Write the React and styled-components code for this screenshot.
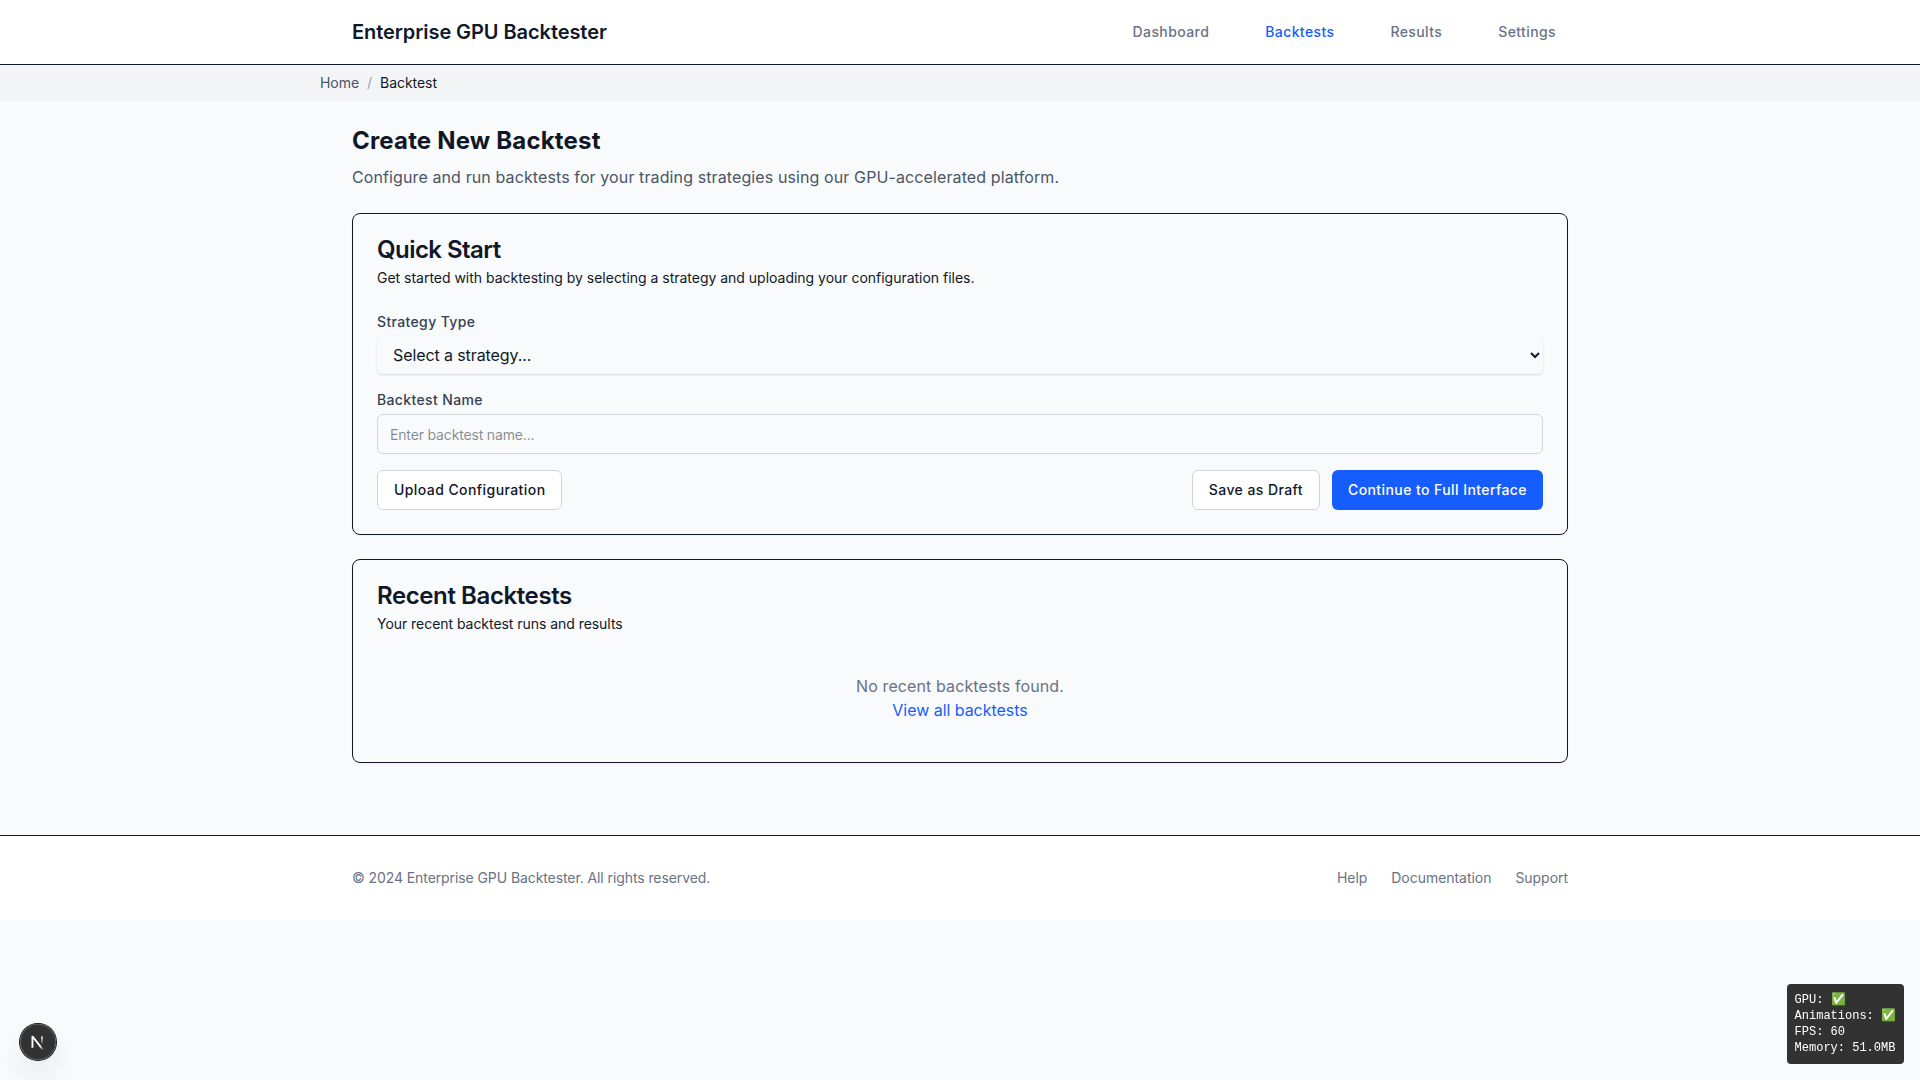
import React from "react";
import styled, { createGlobalStyle, css } from "styled-components";

const GlobalStyle = createGlobalStyle`
  *, *::before, *::after { box-sizing: border-box; }
  body {
    margin: 0;
    background: #f9fafb;
    color: #101828;
    font-family: Inter, "Liberation Sans", sans-serif;
    font-size: 16px;
    line-height: 24px;
  }
  h1, h2, h3, p { margin: 0; }
  a { color: inherit; text-decoration: none; }
  button, input, select { font-family: inherit; color: inherit; margin: 0; }
`;

const Header = styled.header`
  background: #fff;
  border-bottom: 1px solid #101828;
`;

const Container = styled.div`
  width: 100%;
  max-width: 1280px;
  margin: 0 auto;
  padding: 0 32px;
`;

const HeaderRow = styled(Container)`
  display: flex;
  align-items: center;
  justify-content: space-between;
  height: 64px;
`;

const Brand = styled.h1`
  font-size: 20px;
  line-height: 28px;
  font-weight: 600;
  letter-spacing: -0.07px;
`;

const Nav = styled.nav`
  display: flex;
  gap: 32px;
`;

const NavLink = styled.a`
  padding: 8px 12px;
  font-size: 14px;
  line-height: 20px;
  font-weight: 500;
  letter-spacing: 0.4px;
  color: ${(p) => (p.$active ? "#155dfc" : "#6a7282")};
`;

const BreadcrumbBar = styled.div`
  background: #f3f4f6;
  padding: 8px 0;
`;

const Breadcrumb = styled.nav`
  display: flex;
  gap: 8px;
  max-width: 1280px;
  margin: 0 auto;
  font-size: 14px;
  line-height: 20px;
  letter-spacing: -0.05px;
`;

const Crumb = styled.span`
  color: ${(p) => p.$color};
`;

const Main = styled(Container).attrs({ as: "main" })`
  display: flex;
  flex-direction: column;
  gap: 24px;
  padding-top: 24px;
  padding-bottom: 24px;
`;

const PageTitle = styled.h2`
  font-size: 24px;
  line-height: 32px;
  font-weight: 700;
  letter-spacing: 0.18px;
`;

const PageIntro = styled.p`
  margin-top: 8px;
  letter-spacing: 0.108px;
  color: #4a5565;
`;

const Card = styled.section`
  border: 1px solid #101828;
  border-radius: 8px;
  padding: 24px;
  box-shadow: 0 1px 2px 0 rgba(0, 0, 0, 0.05);
`;

const CardHeader = styled.div`
  display: flex;
  flex-direction: column;
  gap: 6px;
  margin-bottom: 24px;
`;

const CardTitle = styled.h3`
  font-size: 24px;
  line-height: 24px;
  font-weight: 600;
  letter-spacing: ${(p) => p.$tracking};
`;

const CardDescription = styled.p`
  font-size: 14px;
  line-height: 20px;
  letter-spacing: ${(p) => p.$tracking};
`;

const Form = styled.div`
  display: flex;
  flex-direction: column;
  gap: 16px;
`;

const Field = styled.div`
  display: flex;
  flex-direction: column;
  gap: 4px;
`;

const Label = styled.label`
  font-size: 14px;
  line-height: 20px;
  font-weight: 500;
  letter-spacing: 0.36px;
  color: #364153;
`;

const Select = styled.select`
  width: 100%;
  height: 38px;
  padding: 8px 12px;
  border: 0;
  border-radius: 6px;
  background: transparent;
  font-size: 16px;
  letter-spacing: -0.1px;
  box-shadow: 0 1px 3px 0 rgba(0, 0, 0, 0.1), 0 1px 2px -1px rgba(0, 0, 0, 0.1);
`;

const Input = styled.input`
  width: 100%;
  height: 40px;
  padding: 8px 12px;
  border: 1px solid #d1d5dc;
  border-radius: 6px;
  background: transparent;
  font-size: 14px;
  line-height: 20px;
  letter-spacing: -0.16px;
  &::placeholder { color: rgba(16, 24, 40, 0.5); opacity: 1; }
`;

const Actions = styled.div`
  display: flex;
  justify-content: space-between;
`;

const ActionGroup = styled.div`
  display: flex;
  gap: 12px;
`;

const Button = styled.button`
  height: 40px;
  padding: 0 16px;
  border: 1px solid #d1d5dc;
  border-radius: 6px;
  background: #fff;
  font-size: 14px;
  line-height: 20px;
  font-weight: 500;
  letter-spacing: 0.42px;
  ${(p) => p.$primary && css`
    border: 0;
    background: #155dfc;
    color: #fff;
  `}
`;

const EmptyState = styled.div`
  padding: 16px 0;
  text-align: center;
  letter-spacing: 0.11px;
  color: #6a7282;
`;

const TextLink = styled.a`
  display: block;
  letter-spacing: -0.04px;
  color: #155dfc;
`;

const Footer = styled.footer`
  margin-top: 48px;
  padding: 32px 0;
  background: #fff;
  border-top: 1px solid #101828;
`;

const FooterRow = styled(Container)`
  display: flex;
  justify-content: space-between;
  font-size: 14px;
  line-height: 20px;
  letter-spacing: -0.09px;
  color: #6a7282;
`;

const FooterLinks = styled.div`
  display: flex;
  gap: 24px;
  letter-spacing: -0.04px;
`;

const StatsOverlay = styled.div`
  position: fixed;
  right: 16px;
  bottom: 16px;
  padding: 8px;
  border-radius: 4px;
  background: rgba(0, 0, 0, 0.8);
  color: #fff;
  font-family: "Liberation Mono", monospace;
  font-size: 12px;
  line-height: 16px;
  white-space: pre;
`;

const DevBadge = styled.div`
  position: fixed;
  left: 20px;
  bottom: 20px;
  width: 36px;
  height: 36px;
  display: flex;
  align-items: center;
  justify-content: center;
  border-radius: 50%;
  background: rgba(0, 0, 0, 0.8);
  box-shadow: 0 0 0 1px #171717, inset 0 0 0 1px rgba(255, 255, 255, 0.14),
    0 16px 32px -8px rgba(0, 0, 0, 0.24);
`;

const Mark = styled.svg`
  flex: none;
`;

const navItems = ["Dashboard", "Backtests", "Results", "Settings"];

function NextMark() {
  return (
    <Mark width="40" height="40" viewBox="0 0 40 40" fill="none">
      <g transform="translate(12.1, 13)" strokeWidth="1.86">
        <path d="M13.3 15.4 L2.34 1.2 V12.8" stroke="url(#markDiagonal)" strokeLinejoin="bevel" />
        <path d="M11.825 1.5 V13.1" stroke="url(#markStem)" />
      </g>
      <defs>
        <linearGradient id="markDiagonal" x1="9.95" y1="11.13" x2="15.1" y2="17.5" gradientUnits="userSpaceOnUse">
          <stop stopColor="#fff" />
          <stop offset="0.6" stopColor="#fff" stopOpacity="0" />
          <stop offset="1" stopColor="#fff" stopOpacity="0" />
        </linearGradient>
        <linearGradient id="markStem" x1="11.8" y1="1" x2="11.8" y2="9.6" gradientUnits="userSpaceOnUse">
          <stop stopColor="#fff" />
          <stop offset="1" stopColor="#fff" stopOpacity="0" />
        </linearGradient>
      </defs>
    </Mark>
  );
}

export default function App() {
  return (
    <>
      <GlobalStyle />
      <Header>
        <HeaderRow>
          <Brand>Enterprise GPU Backtester</Brand>
          <Nav>
            {navItems.map((name) => (
              <NavLink key={name} href="#" $active={name === "Backtests"}>{name}</NavLink>
            ))}
          </Nav>
        </HeaderRow>
      </Header>
      <BreadcrumbBar>
        <Breadcrumb>
          <Crumb $color="#4a5565">Home</Crumb>
          <Crumb $color="#99a1af">/</Crumb>
          <Crumb $color="#101828">Backtest</Crumb>
        </Breadcrumb>
      </BreadcrumbBar>
      <Main>
        <div>
          <PageTitle>Create New Backtest</PageTitle>
          <PageIntro>Configure and run backtests for your trading strategies using our GPU-accelerated platform.</PageIntro>
        </div>
        <Card>
          <CardHeader>
            <CardTitle $tracking="-0.55px">Quick Start</CardTitle>
            <CardDescription $tracking="-0.017px">
              Get started with backtesting by selecting a strategy and uploading your configuration files.
            </CardDescription>
          </CardHeader>
          <Form>
            <Field>
              <Label htmlFor="strategy">Strategy Type</Label>
              <Select id="strategy"><option>Select a strategy...</option></Select>
            </Field>
            <Field>
              <Label htmlFor="name">Backtest Name</Label>
              <Input id="name" placeholder="Enter backtest name..." />
            </Field>
            <Actions>
              <Button>Upload Configuration</Button>
              <ActionGroup>
                <Button>Save as Draft</Button>
                <Button $primary>Continue to Full Interface</Button>
              </ActionGroup>
            </Actions>
          </Form>
        </Card>
        <Card>
          <CardHeader>
            <CardTitle $tracking="-0.4px">Recent Backtests</CardTitle>
            <CardDescription $tracking="-0.045px">Your recent backtest runs and results</CardDescription>
          </CardHeader>
          <EmptyState>
            <p>No recent backtests found.</p>
            <TextLink href="#">View all backtests</TextLink>
          </EmptyState>
        </Card>
      </Main>
      <Footer>
        <FooterRow>
          <span>© 2024 Enterprise GPU Backtester. All rights reserved.</span>
          <FooterLinks>
            <a href="#">Help</a>
            <a href="#">Documentation</a>
            <a href="#">Support</a>
          </FooterLinks>
        </FooterRow>
      </Footer>
      <StatsOverlay>
        <div>GPU: ✅</div>
        <div>Animations: ✅</div>
        <div>FPS: 60</div>
        <div>Memory: 51.0MB</div>
      </StatsOverlay>
      <DevBadge><NextMark /></DevBadge>
    </>
  );
}
